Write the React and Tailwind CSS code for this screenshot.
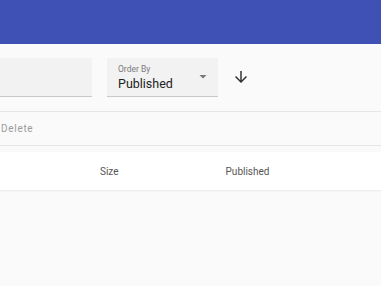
import React from "react";

const App = () => {
  return (
    <div className="w-[381px] h-[286px] overflow-hidden bg-[#fafafa] font-['Roboto',sans-serif]">
      <div className="h-[44px] bg-[#3f51b5]" />

      <div className="flex items-start pt-[14px] h-[67px]">
        <div className="w-[200px] h-[39px] -ml-[108px] shrink-0 bg-[#f2f2f2] border-b border-[#c9c9c9]" />

        <div className="ml-[15px] w-[111px] h-[39px] shrink-0 bg-[#f2f2f2] border-b border-[#c9c9c9] relative pl-[11px] pt-[6px]">
          <div className="text-[8.5px] leading-[11px] text-[#7a7a7a]">Order By</div>
          <div className="text-[12.5px] leading-[18px] text-[#222]">Published</div>
          <svg
            className="absolute right-[10px] top-[16px]"
            width="10"
            height="6"
            viewBox="0 0 10 6"
          >
            <path d="M1.5 1l3.5 3.5L8.5 1z" fill="#777" />
          </svg>
        </div>

        <svg
          className="ml-[14px] mt-[10px] shrink-0"
          width="18"
          height="18"
          viewBox="0 0 24 24"
        >
          <path
            d="M20 12l-1.41-1.41L13 16.17V4h-2v12.17l-5.58-5.59L4 12l8 8 8-8z"
            fill="#333"
          />
        </svg>
      </div>

      <div className="border-t border-[#e6e6e6] h-[34px] flex items-center">
        <span className="pl-[1px] text-[10px] tracking-[0.7px] text-[#9a9a9a]">Delete</span>
      </div>

      <div className="border-t border-[#e6e6e6] pt-[6px]">
        <div className="bg-white h-[38px] flex items-center pt-[1px] shadow-[0_1px_2px_rgba(0,0,0,0.08)] text-[10px] text-[#555]">
          <span className="ml-[100px]">Size</span>
          <span className="ml-[107px]">Published</span>
        </div>
      </div>
    </div>
  );
};

export default App;
